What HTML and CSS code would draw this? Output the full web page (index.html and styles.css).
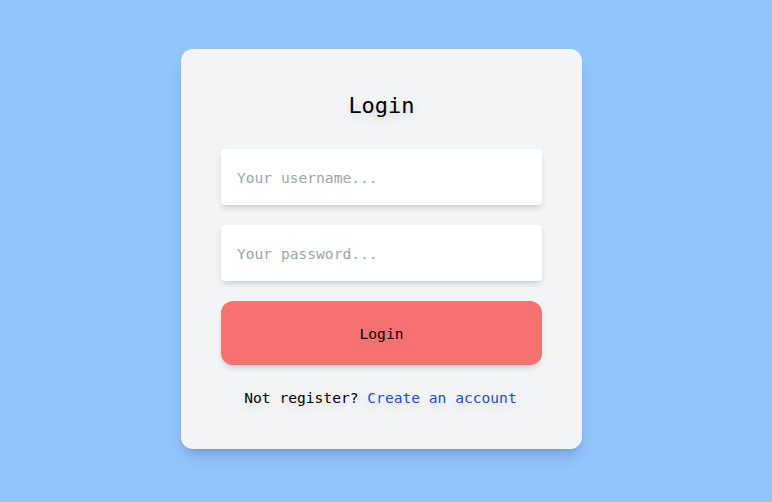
FILE: index.html
```html
<!DOCTYPE html>
<html>
<head>
<meta charset="utf-8">
<link rel="stylesheet" href="styles.css">
</head>
<body>
<div class="page">
  <form class="card">
    <h1 class="title">Login</h1>
    <input class="field" type="text" placeholder="Your username...">
    <input class="field" type="password" placeholder="Your password...">
    <button class="btn" type="button">Login</button>
    <p class="note">Not register? <a class="link" href="#">Create an account</a></p>
  </form>
</div>
</body>
</html>
```

FILE: styles.css
```css
* { box-sizing: border-box; }
html, body { margin: 0; height: 100%; }
body {
  background: #93c5fd;
  font-family: "DejaVu Sans Mono", "Liberation Mono", monospace;
}
.page {
  padding: 49px 0 0 181px;
}
.card {
  width: 401px;
  background: #f3f4f6;
  border-radius: 12px;
  padding: 40px 40px 39px;
  display: flex;
  flex-direction: column;
  box-shadow: 0 10px 15px -3px rgba(0,0,0,0.15), 0 4px 6px -4px rgba(0,0,0,0.15);
}
.card > * { flex-shrink: 0; }
.title {
  margin: 1px 0 27px;
  font-size: 22px;
  line-height: 32px;
  font-weight: normal;
  text-align: center;
  color: #000;
  text-shadow: 0 4px 8px rgba(0,0,0,0.15);
}
.field {
  height: 56px;
  border: none;
  border-radius: 4px;
  background: #fff;
  padding: 0 16px;
  font-family: inherit;
  font-size: 14.6px;
  color: #111;
  margin-bottom: 20px;
  outline: none;
  box-shadow: 0 4px 6px -1px rgba(0,0,0,0.12), 0 2px 4px -2px rgba(0,0,0,0.1);
}
.field::placeholder { color: #9ca3af; }
.btn {
  height: 64px;
  border: none;
  border-radius: 12px;
  background: #f87171;
  font-family: inherit;
  font-size: 14.6px;
  color: #000;
  margin-bottom: 20px;
  box-shadow: 0 4px 6px -1px rgba(0,0,0,0.12), 0 2px 4px -2px rgba(0,0,0,0.1);
}
.note {
  margin: 0;
  padding: 1px 2px 0 0;
  text-align: center;
  font-size: 14.6px;
  line-height: 24px;
  color: #000;
  text-shadow: 0 4px 8px rgba(0,0,0,0.15);
}
.link {
  color: #1d4ed8;
  text-decoration: none;
}
```
